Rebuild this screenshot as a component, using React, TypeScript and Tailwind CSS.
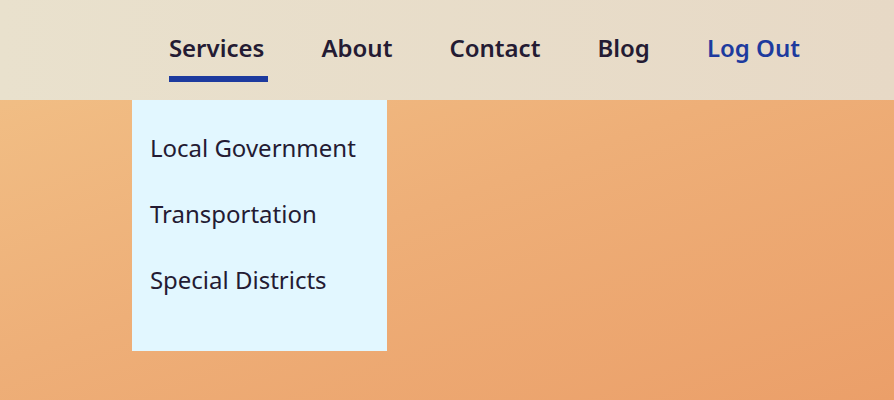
import React from "react";

export default function App() {
  const font = { fontFamily: '"Noto Sans", "Open Sans", sans-serif' };
  return (
    <div
      className="relative w-[894px] h-[400px] overflow-hidden bg-[linear-gradient(160deg,#f2c389_0%,#eeaf78_50%,#eb9f69_100%)]"
      style={font}
    >
      <header className="h-[100px] w-full bg-[linear-gradient(90deg,#e9e1cd,#e7d9c6)] flex justify-end items-start pt-[32px] pr-[94px]">
        <nav className="flex gap-[57px] text-[24px] leading-[32px] font-semibold text-[#241b33]">
          <div className="relative">
            <span>Services</span>
            <span className="absolute left-0 top-[44px] h-[6px] w-[99px] bg-[#1d3a9e]" />
            <div className="absolute left-[-37px] top-[68px] w-[255px] h-[251px] bg-[#e2f7ff] pt-[32px] pl-[18px] flex flex-col gap-[34px] font-normal text-[#241b33]">
              <span>Local Government</span>
              <span>Transportation</span>
              <span>Special Districts</span>
            </div>
          </div>
          <span>About</span>
          <span>Contact</span>
          <span>Blog</span>
          <span className="text-[#1d3a9e]">Log Out</span>
        </nav>
      </header>
    </div>
  );
}
